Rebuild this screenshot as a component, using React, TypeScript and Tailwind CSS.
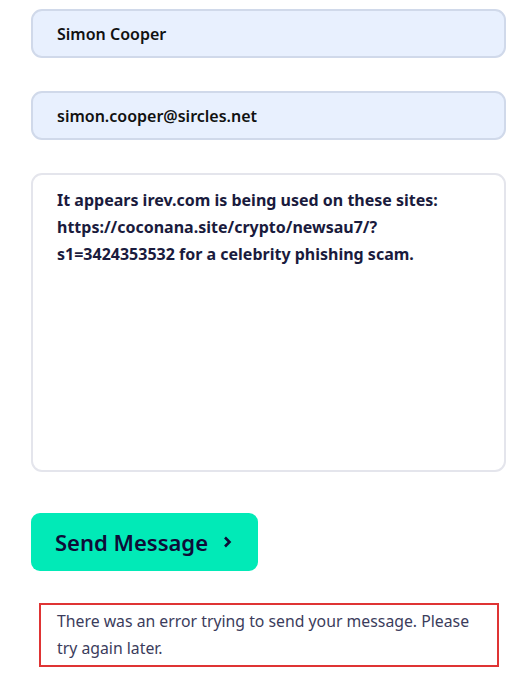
export default function App() {
  return (
    <div
      className="min-h-screen bg-white pl-[31px] pr-[17px] pt-[9px]"
      style={{ fontFamily: '"Noto Sans", "Open Sans", sans-serif' }}
    >
      <form className="flex flex-col" onSubmit={(e) => e.preventDefault()}>
        <input
          type="text"
          defaultValue="Simon Cooper"
          className="h-[49px] w-full rounded-[11px] border-2 border-[#d0d9ea] bg-[#e8f0fe] px-[24px] text-[16px] font-semibold text-[#111111] outline-none"
        />
        <input
          type="email"
          defaultValue="simon.cooper@sircles.net"
          className="mt-[33px] h-[49px] w-full rounded-[11px] border-2 border-[#d0d9ea] bg-[#e8f0fe] px-[24px] text-[16px] font-semibold text-[#111111] outline-none"
        />
        <textarea
          defaultValue="It appears irev.com is being used on these sites: https://coconana.site/crypto/newsau7/?s1=3424353532 for a celebrity phishing scam."
          className="mt-[33px] h-[299px] w-full resize-none rounded-[11px] border-2 border-[#e4e5ec] bg-white px-[24px] py-[12px] text-[16px] font-bold leading-[27px] text-[#1a1b3d] outline-none"
        />

        <div className="mt-[41px]">
          <button
            type="submit"
            className="flex h-[58px] w-[227px] items-center gap-[15px] rounded-[9px] bg-[#01eab7] pl-[24px] text-[22px] font-semibold text-[#0e0d38]"
          >
            <span>Send Message</span>
            <svg width="9" height="12" viewBox="0 0 9 12" fill="none">
              <path d="M2 1.5 L6.5 6 L2 10.5" stroke="#0e0d38" strokeWidth="2.6" />
            </svg>
          </button>
        </div>

        <div className="ml-[8px] mr-[7px] mt-[32px] border-2 border-[#df3434] px-[16px] py-[3px] text-[15.8px] leading-[27px] text-[#3b3c5c]">
          There was an error trying to send your message. Please try again later.
        </div>
      </form>
    </div>
  );
}
